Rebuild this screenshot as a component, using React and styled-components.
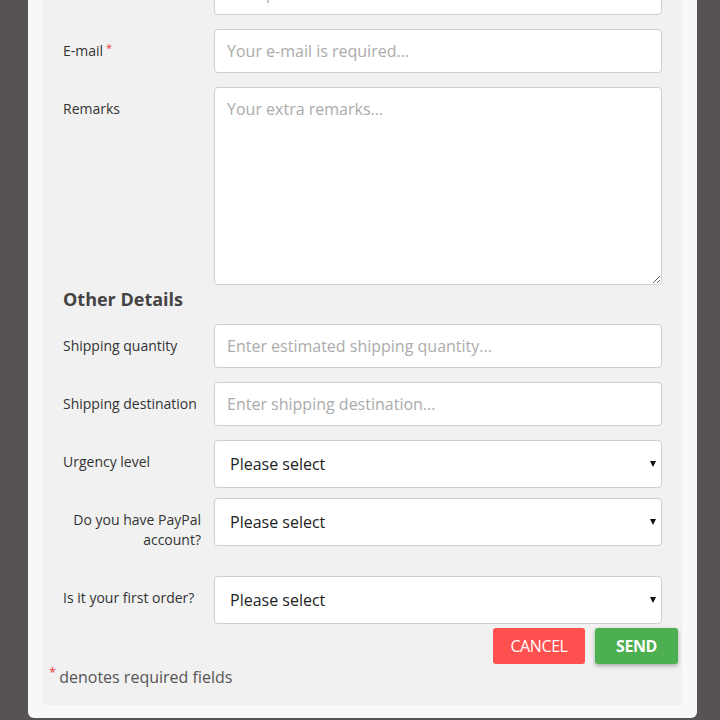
import React from "react";
import styled, { createGlobalStyle } from "styled-components";

const GlobalStyle = createGlobalStyle`
  html, body {
    margin: 0;
    padding: 0;
    background: #575353;
    overflow: hidden;
  }
  * {
    box-sizing: border-box;
  }
`;

const fields = [
  { label: "Phone", placeholder: "Your phone number..." },
  { label: "E-mail", placeholder: "Your e-mail is required...", required: true },
  { label: "Remarks", placeholder: "Your extra remarks...", multiline: true },
];

const otherFields = [
  { label: "Shipping quantity", placeholder: "Enter estimated shipping quantity..." },
  { label: "Shipping destination", placeholder: "Enter shipping destination..." },
  { label: "Urgency level", select: true },
  { label: "Do you have PayPal account?", select: true, right: true },
  { label: "Is it your first order?", select: true },
];

const Field = ({ field }) => (
  <Row>
    <Label $right={field.right}>
      {field.label}
      {field.required && <Star>*</Star>}
    </Label>
    {field.multiline ? (
      <TextArea placeholder={field.placeholder} />
    ) : field.select ? (
      <SelectWrap>
        <Select defaultValue="">
          <option value="">Please select</option>
          <option value="a">Yes</option>
          <option value="b">No</option>
        </Select>
        <Arrow />
      </SelectWrap>
    ) : (
      <Input placeholder={field.placeholder} />
    )}
  </Row>
);

const App = () => {
  return (
    <Screen>
      <GlobalStyle />
      <Card>
        <Panel>
          <Form>
            {fields.map((f) => (
              <Field key={f.label} field={f} />
            ))}
            <Heading>Other Details</Heading>
            {otherFields.map((f) => (
              <Field key={f.label} field={f} />
            ))}
          </Form>
          <Actions>
            <Button $kind="cancel">Cancel</Button>
            <Button $kind="send">Send</Button>
          </Actions>
          <Footnote>
            <FootStar>*</FootStar>denotes required fields
          </Footnote>
        </Panel>
      </Card>
    </Screen>
  );
};

const Screen = styled.div`
  height: 720px;
  overflow: hidden;
  font-family: "Open Sans", "Noto Sans", sans-serif;
`;

const Card = styled.div`
  margin: -60px 23px 0 28px;
  padding: 15px 15px 13px;
  background: #f8f8f8;
  border-radius: 0 0 6px 6px;
`;

const Panel = styled.div`
  background: #f1f1f1;
  border-radius: 3px;
  padding: 16px 4px 17px 6px;
`;

const Form = styled.div`
  display: flex;
  flex-direction: column;
  padding: 0 16px 0 14px;
`;

const Row = styled.div`
  display: flex;
  align-items: flex-start;
  & + & {
    margin-top: 14px;
  }
`;

const Label = styled.label`
  width: 138px;
  flex-shrink: 0;
  margin-right: 13px;
  padding: 12px 0;
  font-size: 14px;
  line-height: 20px;
  color: #333;
  text-align: ${(p) => (p.$right ? "right" : "left")};
`;

const Star = styled.span`
  color: #e53935;
  font-size: 11px;
  vertical-align: top;
  line-height: 14px;
  margin-left: 3px;
`;

const fieldBase = `
  flex: 1;
  min-width: 0;
  border: 1px solid #cfcfcf;
  border-radius: 4px;
  background: #fff;
  font-family: "Open Sans", "Noto Sans", sans-serif;
  font-size: 16px;
  color: #222;
  outline: none;
  &::placeholder {
    color: #ababab;
  }
`;

const Input = styled.input`
  ${fieldBase}
  height: 44px;
  padding: 0 12px;
`;

const TextArea = styled.textarea`
  ${fieldBase}
  height: 198px;
  padding: 10px 12px;
  line-height: 22px;
  resize: vertical;
`;

const SelectWrap = styled.div`
  position: relative;
  flex: 1;
  display: flex;
  margin-bottom: -4px;
`;

const Select = styled.select`
  ${fieldBase}
  height: 48px;
  padding: 0 15px;
  appearance: none;
  -webkit-appearance: none;
`;

const Arrow = styled.span`
  position: absolute;
  right: 6px;
  top: 21px;
  width: 0;
  height: 0;
  border-left: 3.5px solid transparent;
  border-right: 3.5px solid transparent;
  border-top: 6px solid #111;
  pointer-events: none;
`;

const Heading = styled.h3`
  margin: 0 0 14px;
  padding-top: 3px;
  font-size: 18px;
  line-height: 22px;
  font-weight: 700;
  color: #444;
`;

const Actions = styled.div`
  display: flex;
  justify-content: flex-end;
  gap: 10px;
  margin-top: 8px;
`;

const Button = styled.button`
  height: 36px;
  border: none;
  border-radius: 3px;
  color: #fff;
  font-family: "Open Sans", "Noto Sans", sans-serif;
  font-size: 16px;
  text-transform: uppercase;
  letter-spacing: -0.4px;
  cursor: pointer;
  width: ${(p) => (p.$kind === "send" ? "83px" : "92px")};
  font-weight: ${(p) => (p.$kind === "send" ? 700 : 400)};
  background: ${(p) => (p.$kind === "send" ? "#4caf50" : "#ff5050")};
  box-shadow: ${(p) =>
    p.$kind === "send" ? "0 2px 4px rgba(0, 0, 0, 0.3)" : "none"};
`;

const Footnote = styled.div`
  margin-top: 2px;
  font-size: 16px;
  line-height: 22px;
  color: #555;
`;

const FootStar = styled.span`
  color: #e53935;
  font-size: 13px;
  vertical-align: top;
  line-height: 12px;
  margin-right: 3px;
`;

export default App;
